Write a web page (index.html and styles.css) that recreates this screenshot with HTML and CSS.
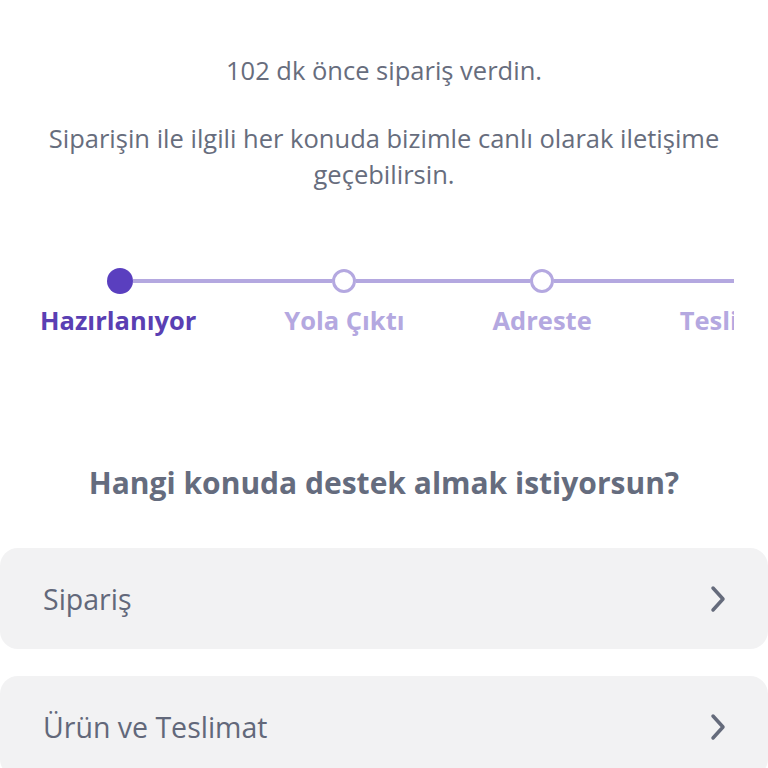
FILE: index.html
```html
<!DOCTYPE html>
<html lang="tr">
<head>
<meta charset="utf-8">
<link rel="stylesheet" href="styles.css">
</head>
<body>
<main class="page">
  <p class="ago">102 dk önce sipariş verdin.</p>
  <p class="info">Siparişin ile ilgili her konuda bizimle canlı olarak iletişime geçebilirsin.</p>

  <div class="stepper">
    <div class="step step-first active">
      <div class="track"><span class="dot"></span></div>
      <span class="label">Hazırlanıyor</span>
    </div>
    <div class="step">
      <div class="track"><span class="dot"></span></div>
      <span class="label">Yola Çıktı</span>
    </div>
    <div class="step">
      <div class="track"><span class="dot"></span></div>
      <span class="label">Adreste</span>
    </div>
    <div class="step">
      <div class="track"><span class="dot"></span></div>
      <span class="label">Teslim Edildi</span>
    </div>
  </div>

  <h2 class="question">Hangi konuda destek almak istiyorsun?</h2>

  <div class="topics">
    <div class="topic">
      <span class="topic-text">Sipariş</span>
      <svg class="chev" viewBox="0 0 16 28" width="16" height="28"><path d="M3 3 L13 14 L3 25" fill="none" stroke="currentColor" stroke-width="3.5" stroke-linecap="round" stroke-linejoin="round"/></svg>
    </div>
    <div class="topic">
      <span class="topic-text">Ürün ve Teslimat</span>
      <svg class="chev" viewBox="0 0 16 28" width="16" height="28"><path d="M3 3 L13 14 L3 25" fill="none" stroke="currentColor" stroke-width="3.5" stroke-linecap="round" stroke-linejoin="round"/></svg>
    </div>
  </div>
</main>
</body>
</html>
```
FILE: styles.css
```css
html, body {
  margin: 0;
  padding: 0;
  background: #ffffff;
}
body {
  font-family: "Open Sans", "Noto Sans", sans-serif;
  color: #676d7d;
  overflow: hidden;
}
.page {
  display: flex;
  flex-direction: column;
  padding-top: 52px;
}
.ago {
  margin: 0;
  font-size: 25.5px;
  line-height: 36px;
  text-align: center;
}
.info {
  margin: 32px 30px 0;
  font-size: 25.5px;
  line-height: 36px;
  text-align: center;
}
.stepper {
  margin-top: 76px;
  width: 734px;
  display: flex;
  overflow: hidden;
}
.step {
  display: flex;
  flex-direction: column;
  align-items: center;
  flex: none;
}
.track {
  align-self: stretch;
  display: flex;
  align-items: center;
  height: 26px;
}
.track::before,
.track::after {
  content: "";
  flex: 1;
  height: 4px;
  background: #b4a8e0;
}
.step-first .track::before {
  background: transparent;
}
.dot {
  width: 18px;
  height: 18px;
  border: 3px solid #b4a8e0;
  border-radius: 50%;
  background: #ffffff;
  flex: none;
}
.active .dot {
  width: 26px;
  height: 26px;
  border: 0;
  background: #5a3fbf;
}
.label {
  margin-top: 7px;
  padding: 0 44px;
  font-size: 25.5px;
  line-height: 38px;
  font-weight: 700;
  color: #b4a8e0;
  white-space: nowrap;
}
.step-first .label {
  padding-left: 40px;
}
.active .label {
  color: #5a3fb3;
}
.question {
  margin: 124px 0 0;
  font-size: 30px;
  line-height: 40px;
  font-weight: 700;
  text-align: center;
  color: #656c7e;
}
.topics {
  margin-top: 45px;
  display: flex;
  flex-direction: column;
  gap: 27px;
}
.topic {
  height: 101px;
  display: flex;
  align-items: center;
  justify-content: space-between;
  padding: 0 42px 0 43px;
  background: #f2f2f3;
  border-radius: 18px;
}
.topic-text {
  font-size: 28.5px;
  color: #62687a;
}
.chev {
  color: #656b7b;
}
```
